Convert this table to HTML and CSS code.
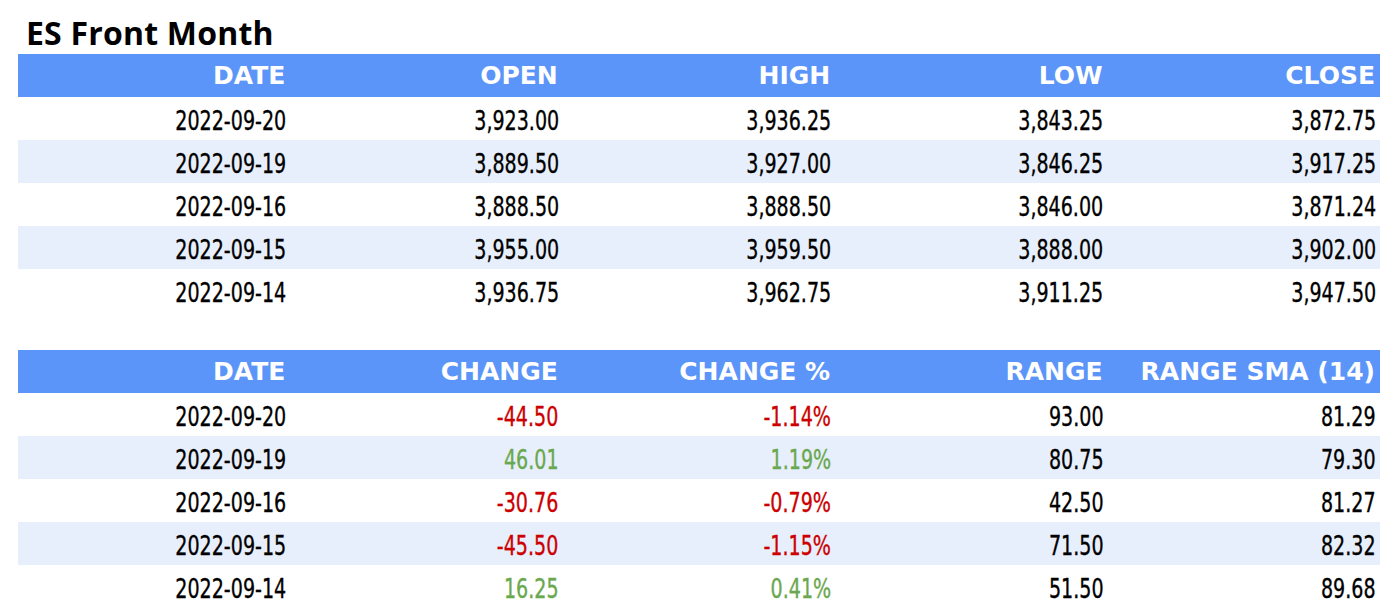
FILE: index.html
```html
<!DOCTYPE html>
<html lang="en">
<head>
<meta charset="utf-8">
<title>ES Front Month</title>
<link rel="stylesheet" href="styles.css">
</head>
<body>
<div class="page">
  <h1 class="title">ES Front Month</h1>
  <table class="data">
    <thead>
      <tr><th>DATE</th><th>OPEN</th><th>HIGH</th><th>LOW</th><th>CLOSE</th></tr>
    </thead>
    <tbody>
      <tr><td><span class="v">2022-09-20</span></td><td><span class="v">3,923.00</span></td><td><span class="v">3,936.25</span></td><td><span class="v">3,843.25</span></td><td><span class="v">3,872.75</span></td></tr>
      <tr><td><span class="v">2022-09-19</span></td><td><span class="v">3,889.50</span></td><td><span class="v">3,927.00</span></td><td><span class="v">3,846.25</span></td><td><span class="v">3,917.25</span></td></tr>
      <tr><td><span class="v">2022-09-16</span></td><td><span class="v">3,888.50</span></td><td><span class="v">3,888.50</span></td><td><span class="v">3,846.00</span></td><td><span class="v">3,871.24</span></td></tr>
      <tr><td><span class="v">2022-09-15</span></td><td><span class="v">3,955.00</span></td><td><span class="v">3,959.50</span></td><td><span class="v">3,888.00</span></td><td><span class="v">3,902.00</span></td></tr>
      <tr><td><span class="v">2022-09-14</span></td><td><span class="v">3,936.75</span></td><td><span class="v">3,962.75</span></td><td><span class="v">3,911.25</span></td><td><span class="v">3,947.50</span></td></tr>
    </tbody>
  </table>
  <table class="data second">
    <thead>
      <tr><th>DATE</th><th>CHANGE</th><th>CHANGE %</th><th>RANGE</th><th>RANGE SMA (14)</th></tr>
    </thead>
    <tbody>
      <tr><td><span class="v">2022-09-20</span></td><td class="neg"><span class="v">-44.50</span></td><td class="neg"><span class="v">-1.14%</span></td><td><span class="v">93.00</span></td><td><span class="v">81.29</span></td></tr>
      <tr><td><span class="v">2022-09-19</span></td><td class="pos"><span class="v">46.01</span></td><td class="pos"><span class="v">1.19%</span></td><td><span class="v">80.75</span></td><td><span class="v">79.30</span></td></tr>
      <tr><td><span class="v">2022-09-16</span></td><td class="neg"><span class="v">-30.76</span></td><td class="neg"><span class="v">-0.79%</span></td><td><span class="v">42.50</span></td><td><span class="v">81.27</span></td></tr>
      <tr><td><span class="v">2022-09-15</span></td><td class="neg"><span class="v">-45.50</span></td><td class="neg"><span class="v">-1.15%</span></td><td><span class="v">71.50</span></td><td><span class="v">82.32</span></td></tr>
      <tr><td><span class="v">2022-09-14</span></td><td class="pos"><span class="v">16.25</span></td><td class="pos"><span class="v">0.41%</span></td><td><span class="v">51.50</span></td><td><span class="v">89.68</span></td></tr>
    </tbody>
  </table>
</div>
</body>
</html>
```
FILE: styles.css
```css
html, body {
  margin: 0;
  padding: 0;
  background: #ffffff;
}
.page {
  padding: 0 12px 0 18px;
}
.title {
  margin: 0 0 3px 0;
  padding: 15px 0 0 8px;
  font-family: "Open Sans", "DejaVu Sans", sans-serif;
  font-weight: 700;
  font-size: 32px;
  letter-spacing: 0.2px;
  line-height: 36px;
  color: #000000;
}
.data {
  width: 1362px;
  border-collapse: collapse;
  table-layout: fixed;
}
.data.second {
  margin-top: 38px;
}
.data th {
  background: #5b95f9;
  color: #ffffff;
  font-family: "DejaVu Sans", sans-serif;
  font-weight: 700;
  font-size: 25px;
  height: 43px;
  padding: 0 5px 0 0;
  text-align: right;
  vertical-align: middle;
  white-space: nowrap;
}
.data td {
  font-family: "DejaVu Sans Condensed", "DejaVu Sans", sans-serif;
  font-stretch: condensed;
  font-size: 27px;
  color: #000000;
  height: 40px;
  padding: 3px 4px 0 0;
  text-align: right;
  vertical-align: middle;
  white-space: nowrap;
}
.data td .v {
  display: inline-block;
  transform: scaleX(0.785);
  transform-origin: right center;
  -webkit-text-stroke: 0.35px currentColor;
}
.data tbody tr:nth-child(even) td {
  background: #e8effc;
}
.data td.neg {
  color: #cc0000;
}
.data td.pos {
  color: #6aa84f;
}
```
